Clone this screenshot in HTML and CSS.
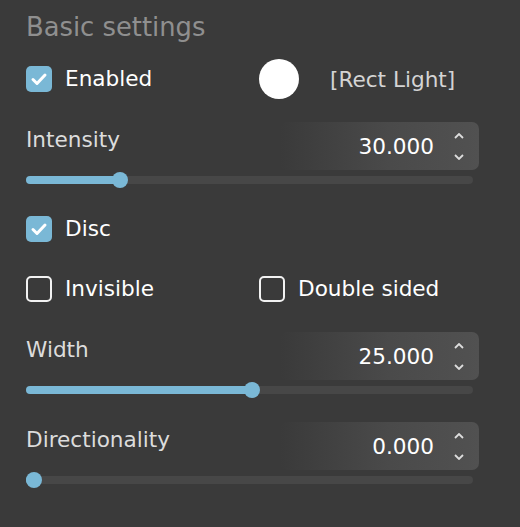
FILE: index.html
```html
<!DOCTYPE html>
<html>
<head>
<meta charset="utf-8">
<link rel="stylesheet" href="styles.css">
</head>
<body>
<div class="panel">
  <div class="title">Basic settings</div>

  <div class="row two first">
    <label class="check">
      <span class="box on"><svg viewBox="0 0 26 26" width="26" height="26"><path d="M7 13.5 L11 17.5 L19 9" fill="none" stroke="#fff" stroke-width="3" stroke-linecap="round" stroke-linejoin="round"/></svg></span>
      <span class="lbl">Enabled</span>
    </label>
    <div class="light">
      <span class="swatch"></span>
      <span class="lname">[Rect Light]</span>
    </div>
  </div>

  <div class="field gap-a">
    <div class="field-top">
      <span class="flabel">Intensity</span>
      <div class="num">
        <span class="val">30.000</span>
        <span class="spin">
          <svg viewBox="0 0 10 6" width="10" height="6"><path d="M1 5 L5 1 L9 5" fill="none" stroke="#ddd" stroke-width="1.8"/></svg>
          <svg viewBox="0 0 10 6" width="10" height="6"><path d="M1 1 L5 5 L9 1" fill="none" stroke="#ddd" stroke-width="1.8"/></svg>
        </span>
      </div>
    </div>
    <div class="track"><div class="fill" style="--p:0.2"><span class="thumb"></span></div></div>
  </div>

  <div class="row gap-b">
    <label class="check">
      <span class="box on"><svg viewBox="0 0 26 26" width="26" height="26"><path d="M7 13.5 L11 17.5 L19 9" fill="none" stroke="#fff" stroke-width="3" stroke-linecap="round" stroke-linejoin="round"/></svg></span>
      <span class="lbl">Disc</span>
    </label>
  </div>

  <div class="row two gap-c">
    <label class="check">
      <span class="box off"></span>
      <span class="lbl">Invisible</span>
    </label>
    <label class="check">
      <span class="box off"></span>
      <span class="lbl">Double sided</span>
    </label>
  </div>

  <div class="field gap-d">
    <div class="field-top">
      <span class="flabel">Width</span>
      <div class="num">
        <span class="val">25.000</span>
        <span class="spin">
          <svg viewBox="0 0 10 6" width="10" height="6"><path d="M1 5 L5 1 L9 5" fill="none" stroke="#ddd" stroke-width="1.8"/></svg>
          <svg viewBox="0 0 10 6" width="10" height="6"><path d="M1 1 L5 5 L9 1" fill="none" stroke="#ddd" stroke-width="1.8"/></svg>
        </span>
      </div>
    </div>
    <div class="track"><div class="fill" style="--p:0.506"><span class="thumb"></span></div></div>
  </div>

  <div class="field gap-e">
    <div class="field-top">
      <span class="flabel">Directionality</span>
      <div class="num">
        <span class="val">0.000</span>
        <span class="spin">
          <svg viewBox="0 0 10 6" width="10" height="6"><path d="M1 5 L5 1 L9 5" fill="none" stroke="#ddd" stroke-width="1.8"/></svg>
          <svg viewBox="0 0 10 6" width="10" height="6"><path d="M1 1 L5 5 L9 1" fill="none" stroke="#ddd" stroke-width="1.8"/></svg>
        </span>
      </div>
    </div>
    <div class="track"><div class="fill" style="--p:0"><span class="thumb"></span></div></div>
  </div>
</div>
</body>
</html>
```
FILE: styles.css
```css
html, body {
  margin: 0;
  padding: 0;
  background: #3a3a3a;
}
body {
  width: 520px;
  height: 527px;
  overflow: hidden;
  font-family: "DejaVu Sans", "Liberation Sans", sans-serif;
  font-size: 21.6px;
}
.panel {
  padding: 12px 41px 0 26px;
}
.title {
  font-size: 25.8px;
  line-height: 30px;
  color: #8f8f8f;
}
.row {
  display: grid;
  grid-template-columns: 1fr;
  height: 40px;
  align-items: center;
}
.row.two {
  grid-template-columns: 233px 1fr;
}
.first { margin-top: 17px; }
.gap-a { margin-top: 23px; }
.gap-b { margin-top: 25px; }
.gap-c { margin-top: 20px; }
.gap-d { margin-top: 23px; }
.gap-e { margin-top: 28px; }

.check {
  display: flex;
  align-items: center;
  gap: 13px;
  color: #ffffff;
  line-height: 24px;
}
.box {
  width: 26px;
  height: 26px;
  box-sizing: border-box;
  border-radius: 5px;
  flex: none;
  display: block;
}
.box svg { display: block; }
.box.on { background: #7ab8d6; }
.box.off { border: 2px solid #f2f2f2; }
.lbl { white-space: nowrap; }

.light {
  display: flex;
  align-items: center;
  gap: 31px;
}
.swatch {
  width: 40px;
  height: 40px;
  border-radius: 50%;
  background: #ffffff;
  flex: none;
}
.lname {
  color: #d4d4d4;
  white-space: nowrap;
}

.field-top {
  display: flex;
  justify-content: space-between;
  align-items: flex-start;
}
.flabel {
  color: #dcdcdc;
  line-height: 24px;
  padding-top: 6px;
}
.num {
  width: 199px;
  height: 48px;
  box-sizing: border-box;
  border-radius: 7px;
  background: linear-gradient(to right, rgba(80,80,80,0) 0%, #4a4a4a 55%, #515151 100%);
  display: flex;
  align-items: center;
  justify-content: flex-end;
  padding-right: 15px;
  gap: 20px;
}
.val {
  color: #ffffff;
  line-height: 24px;
  padding-top: 2px;
}
.spin {
  display: flex;
  flex-direction: column;
  gap: 15px;
  width: 10px;
}
.spin svg { display: block; }

.track {
  margin-top: 6px;
  margin-right: 6px;
  height: 8px;
  border-radius: 4px;
  background: #474747;
  position: relative;
}
.fill {
  height: 8px;
  border-radius: 4px;
  background: #7ab8d6;
  width: calc(8px + var(--p) * (100% - 16px));
  position: relative;
}
.thumb {
  position: absolute;
  right: -8px;
  top: -4px;
  width: 16px;
  height: 16px;
  border-radius: 50%;
  background: #7ab8d6;
}
```
